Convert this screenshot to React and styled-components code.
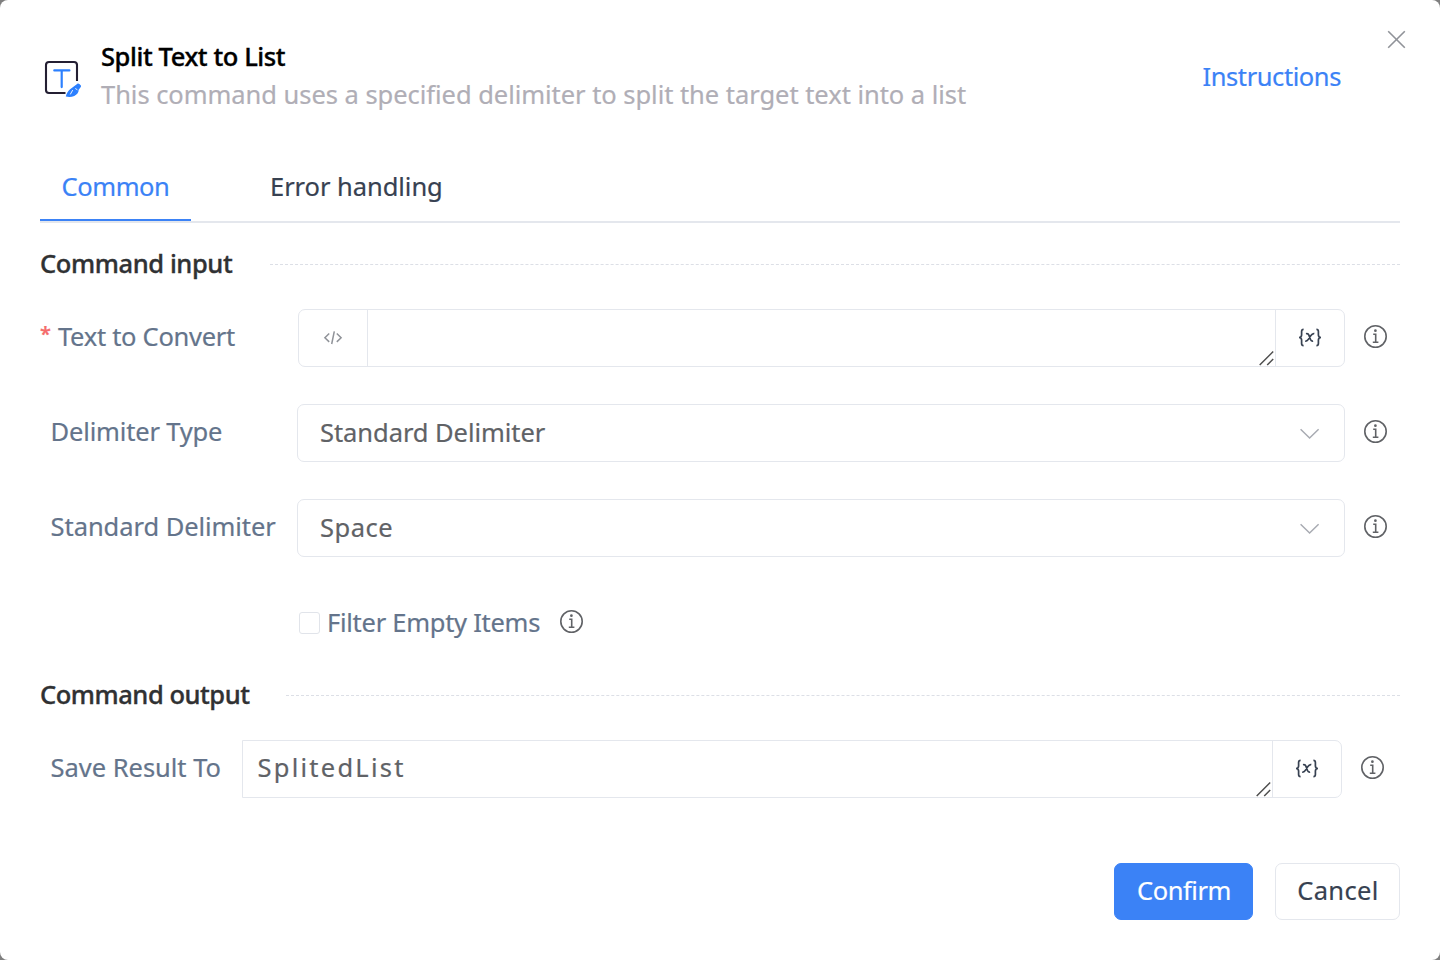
import React from "react";
import styled, { createGlobalStyle } from "styled-components";

const Global = createGlobalStyle`
  *, *::before, *::after { box-sizing: border-box; }
  body {
    margin: 0;
    background: #7f7f7f;
    font-family: "Noto Sans", "Open Sans", sans-serif;
    font-size: 25.5px;
    line-height: 38px;
    -webkit-text-stroke: 0.2px currentColor;
  }
  button { font: inherit; cursor: pointer; }
  svg { display: block; flex: none; }
`;

const Dialog = styled.div`
  width: 1440px;
  height: 960px;
  padding: 0 40px;
  background: #fff;
  border-radius: 8px;
  display: flex;
  flex-direction: column;
  overflow: hidden;
`;

const Header = styled.header`
  height: 152px;
  display: flex;
  align-items: flex-start;
`;

const Logo = styled.div`
  padding: 57px 19px 0 2px;
`;

const Heading = styled.div`
  flex: 1;
  padding-top: 37px;
`;

const Title = styled.h1`
  margin: 0;
  height: 38px;
  font-size: inherit;
  font-weight: 500;
  letter-spacing: -0.41px;
  color: #000;
  -webkit-text-stroke: 0.35px #000;
`;

const Description = styled.p`
  margin: 0;
  color: #b0aeb6;
  letter-spacing: -0.04px;
`;

const Instructions = styled.a`
  margin: 57px 45px 0 0;
  color: #3b82f6;
  letter-spacing: -0.42px;
`;

const CloseButton = styled.button`
  margin: 29px -7px 0 0;
  padding: 0;
  border: 0;
  background: none;
  color: #909399;
`;

const Tabs = styled.nav`
  height: 71px;
  display: flex;
  gap: 58px;
  border-bottom: 2px solid #e4e7ed;
`;

const Tab = styled.button`
  height: 69px;
  padding: 0 21px;
  border: 0;
  border-bottom: 2px solid ${(p) => (p.$active ? "#3b82f6" : "transparent")};
  background: none;
  color: ${(p) => (p.$active ? "#3b82f6" : "#374151")};
  letter-spacing: ${(p) => p.$tracking || 0}px;
  white-space: nowrap;
  width: ${(p) => (p.$active ? "151px" : "auto")};
`;

const SectionHead = styled.div`
  height: ${(p) => p.$height}px;
  padding-top: ${(p) => p.$top}px;
  display: flex;
  align-items: flex-start;
  gap: 36px;
`;

const SectionTitle = styled.h2`
  margin: 0;
  width: ${(p) => p.$width}px;
  font-size: inherit;
  font-weight: 500;
  letter-spacing: ${(p) => p.$tracking}px;
  white-space: nowrap;
  color: #303133;
  -webkit-text-stroke: 0.35px #303133;
`;

const Rule = styled.div`
  flex: 1;
  margin-top: 20px;
  border-top: 1px dashed #dcdfe6;
`;

const Row = styled.div`
  height: 58px;
  margin-bottom: ${(p) => (p.$gap ?? 37)}px;
  display: flex;
  align-items: center;
`;

const Label = styled.label`
  width: ${(p) => p.$width}px;
  padding-left: ${(p) => (p.$required ? 0 : 10.6)}px;
  margin-top: -4px;
  display: flex;
  flex: none;
  color: #64748b;
  letter-spacing: ${(p) => p.$tracking || 0}px;
  white-space: nowrap;
`;

const Asterisk = styled.span`
  width: 18px;
  margin-top: -2px;
  font-size: 20px;
  font-weight: 600;
  color: #f56c6c;
`;

const Group = styled.div`
  flex: none;
  width: ${(p) => p.$width}px;
  height: 58px;
  display: flex;
  border: 1px solid #e4e7ed;
  border-radius: ${(p) => (p.$squareLeft ? "0 7px 7px 0" : "7px")};
`;

const Addon = styled.button`
  width: ${(p) => p.$width}px;
  padding: 0 1px 0 0;
  display: flex;
  align-items: center;
  justify-content: center;
  border: 0 solid #e4e7ed;
  border-${(p) => p.$edge}-width: 1px;
  background: none;
  color: ${(p) => p.$color};
`;

const TextArea = styled.div`
  flex: 1;
  padding: 7px 0 0 14.5px;
  display: flex;
  justify-content: space-between;
  color: #606266;
  letter-spacing: 2.25px;

  svg { align-self: flex-end; }
`;

const Select = styled.div`
  flex: none;
  width: 1048px;
  height: 58px;
  padding: 0 23px 0 22px;
  display: flex;
  align-items: center;
  justify-content: space-between;
  border: 1px solid #e4e7ed;
  border-radius: 7px;
  color: #606266;
  letter-spacing: ${(p) => p.$tracking}px;

  span { margin-top: -2px; }
`;

const Info = styled.div`
  margin: -3px 0 0 18px;
`;

const CheckRow = styled.div`
  height: 76px;
  margin-left: 259px;
  padding-top: 9px;
  display: flex;
  align-items: flex-start;
`;

const Checkbox = styled.div`
  width: 21px;
  height: 22px;
  margin: 9px 7px 0 0;
  border: 1px solid #e1e4ea;
  border-radius: 3px;
`;

const CheckLabel = styled.span`
  width: 213px;
  color: #64748b;
  letter-spacing: -0.27px;
  white-space: nowrap;
`;

const CheckInfo = styled.div`
  margin: 6px 0 0 19px;
`;

const Footer = styled.footer`
  margin-top: 65px;
  display: flex;
  justify-content: flex-end;
  gap: 22px;
`;

const Button = styled.button`
  width: ${(p) => p.$width}px;
  height: 57px;
  padding: 0 0 3px 1px;
  border: 1px solid ${(p) => (p.$primary ? "#3b82f6" : "#e4e7ed")};
  border-radius: 7px;
  background: ${(p) => (p.$primary ? "#3b82f6" : "#fff")};
  color: ${(p) => (p.$primary ? "#fff" : "#374151")};
  letter-spacing: ${(p) => p.$tracking}px;
`;

const InfoIcon = () => (
  <svg width="25" height="25" viewBox="0 0 25 25" fill="none" stroke="#606266" strokeWidth="1.6">
    <circle cx="12.5" cy="12.5" r="10.7" />
    <circle cx="12.4" cy="6.7" r="1.35" fill="#606266" stroke="none" />
    <path d="M10.2 10.2h2.5v8M9.8 18.2h5.6" />
  </svg>
);

const VariableIcon = () => (
  <svg width="24" height="20" viewBox="0 0 24 20" fill="none" stroke="currentColor" strokeWidth="1.7">
    <path d="M5.6 1.3C4 1.3 3.6 2 3.6 3.4v3.6c0 1.5-.7 2.3-2.5 2.5 1.8.2 2.5 1 2.5 2.5v3.6c0 1.4.4 2.1 2 2.1" />
    <path d="M18.4 1.3c1.6 0 2 .7 2 2.100v3.600c0 1.500.7 2.300 2.500 2.500-1.800.2-2.500 1-2.500 2.500v3.600c0 1.400-.4 2.100-2 2.100" />
    <path d="M8 5.700c1.600-.5 2.500.3 3 1.700l1.400 3.900c.5 1.400 1.200 2.100 2.700 1.700M16.300 5.600c-1.500-.4-2.500.5-3.600 2.100l-2 3.200c-1 1.600-2 2.500-3.500 2.100" />
  </svg>
);

const CodeIcon = () => (
  <svg width="20" height="16" viewBox="0 0 20 16" fill="none" stroke="currentColor" strokeWidth="1.5">
    <path d="M6.2 3.5 1.900 7.700l4.300 4.200M13.800 3.500l4.300 4.200-4.300 4.200M11.300 1.400 8.700 14" />
  </svg>
);

const GripIcon = () => (
  <svg width="16" height="16" viewBox="0 0 16 16" fill="none" stroke="#4f4f4f" strokeWidth="1.5">
    <path d="M.7 15 14.2 1.500M8.200 15l6-6" />
  </svg>
);

const ChevronIcon = () => (
  <svg width="22" height="14" viewBox="0 0 22 14" fill="none" stroke="#a8abb2" strokeWidth="1.5">
    <path d="M1.600 3.200 10.600 12l9-8.800" />
  </svg>
);

const CloseIcon = () => (
  <svg width="21" height="21" viewBox="0 0 21 21" fill="none" stroke="currentColor" strokeWidth="1.6">
    <path d="m2.200 2.200 16.600 16.600M18.800 2.200 2.200 18.800" />
  </svg>
);

const CommandIcon = () => (
  <svg width="40" height="42" viewBox="0 0 40 42" fill="none">
    <path
      d="M35 24V8q0-3-3-3H7Q4 5 4 8v25q0 3 3 3h16.500"
      stroke="#241f33"
      strokeWidth="2.1"
    />
    <path d="M12.300 13.400h15.100M19.700 13.400v16.700" stroke="#2c80ff" strokeWidth="2.2" strokeLinecap="round" />
    <path
      d="M23.800 39.500c.8-3 2-5.300 4.300-7.200l7-5.400c.8-.6 1.600-.5 2.300.1l1 .9c.8.700.8 1.500.2 2.300l-1.900 2.600c0 3-1.800 5-4.400 6.100-2.700 1.200-5.600 1.300-8.500.6z"
      fill="#2c80ff"
    />
    <path d="m28.300 37.400 2.400-4.300M33.300 31.500l2.100 1.300" stroke="#fff" strokeWidth=".9" />
  </svg>
);

export default function App() {
  return (
    <>
      <Global />
      <Dialog role="dialog">
        <Header>
          <Logo><CommandIcon /></Logo>
          <Heading>
            <Title>Split Text to List</Title>
            <Description>
              This command uses a specified delimiter to split the target text into a list
            </Description>
          </Heading>
          <Instructions>Instructions</Instructions>
          <CloseButton aria-label="Close"><CloseIcon /></CloseButton>
        </Header>

        <Tabs>
          <Tab $active $tracking={-0.42}>Common</Tab>
          <Tab $tracking={-0.05}>Error handling</Tab>
        </Tabs>

        <SectionHead $height={86} $top={21}>
          <SectionTitle $width={194} $tracking={-0.4}>Command input</SectionTitle>
          <Rule />
        </SectionHead>

        <Row>
          <Label $required $width={258} $tracking={-0.28}>
            <Asterisk>*</Asterisk>
            Text to Convert
          </Label>
          <Group $width={1047}>
            <Addon $edge="right" $width={69} $color="#909399"><CodeIcon /></Addon>
            <TextArea><span /><GripIcon /></TextArea>
            <Addon $edge="left" $width={69} $color="#374151"><VariableIcon /></Addon>
          </Group>
          <Info><InfoIcon /></Info>
        </Row>

        <Row>
          <Label $width={257} $tracking={-0.17}>Delimiter Type</Label>
          <Select $tracking={-0.06}><span>Standard Delimiter</span><ChevronIcon /></Select>
          <Info><InfoIcon /></Info>
        </Row>

        <Row>
          <Label $width={257} $tracking={-0.06}>Standard Delimiter</Label>
          <Select $tracking={0.5}><span>Space</span><ChevronIcon /></Select>
          <Info><InfoIcon /></Info>
        </Row>

        <CheckRow>
          <Checkbox />
          <CheckLabel>Filter Empty Items</CheckLabel>
          <CheckInfo><InfoIcon /></CheckInfo>
        </CheckRow>

        <SectionHead $height={70} $top={5}>
          <SectionTitle $width={210} $tracking={-0.46}>Command output</SectionTitle>
          <Rule />
        </SectionHead>

        <Row $gap={0}>
          <Label $width={202} $tracking={-0.03}>Save Result To</Label>
          <Group $width={1100} $squareLeft>
            <TextArea><span>SplitedList</span><GripIcon /></TextArea>
            <Addon $edge="left" $width={69} $color="#374151"><VariableIcon /></Addon>
          </Group>
          <Info><InfoIcon /></Info>
        </Row>

        <Footer>
          <Button $primary $width={139} $tracking={-0.42}>Confirm</Button>
          <Button $width={125} $tracking={0.35}>Cancel</Button>
        </Footer>
      </Dialog>
    </>
  );
}
